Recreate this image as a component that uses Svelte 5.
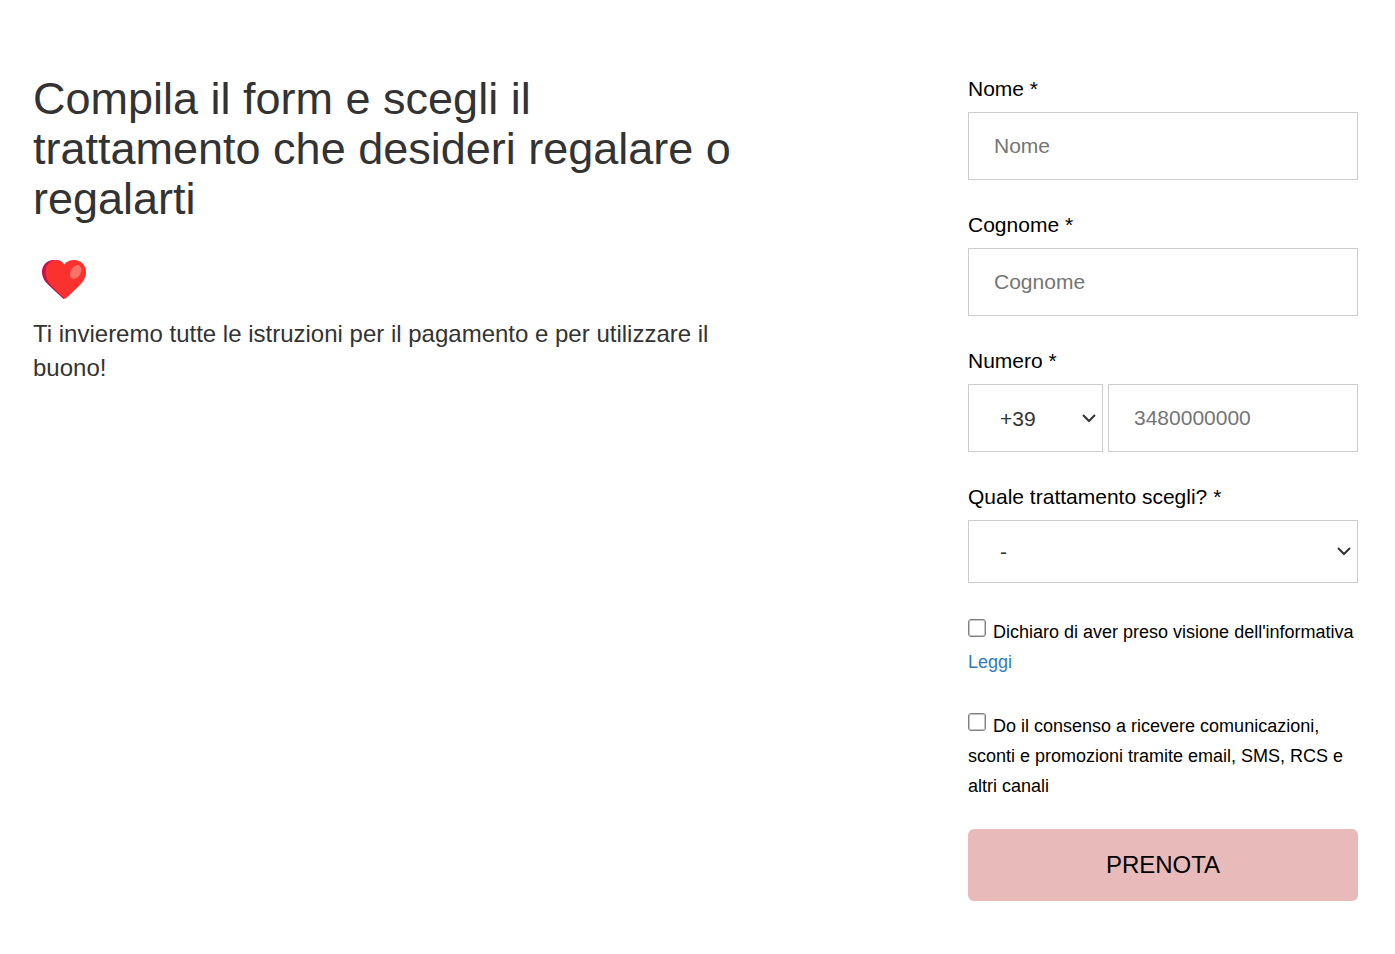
<script>
  let nome = $state('');
  let cognome = $state('');
  let numero = $state('');
</script>

<main>
  <section class="intro">
    <h1>Compila il form e scegli il trattamento che desideri regalare o regalarti</h1>
    <svg class="heart" viewBox="0 0 46 40" role="img" aria-label="Cuore">
      <path fill="#c9104c" d="M22.500 39L9 26.500C4 22 1 17.500 1 12 1 5 6 0 12.500 0h3C19 .5 22 2.500 23 4.500L26 36Z" />
      <path fill="#fb312f" d="M23.500 38.500L11 26.500C7 22 4.500 17.500 4.500 12 4.500 5 9 0 15 0c3.500 0 6.500 1.700 8.200 4.500C25.500 1.700 29 0 33 0c7 0 12 5 12 12 0 5.500-3 10-7.500 14.500L25 38.300q-.8.700-1.500.2Z" />
      <ellipse cx="34.700" cy="12" rx="5" ry="7.500" transform="rotate(32 34.700 12)" fill="#f97268" />
    </svg>
    <p>Ti invieremo tutte le istruzioni per il pagamento e per utilizzare il buono!</p>
  </section>

  <form onsubmit={(e) => e.preventDefault()}>
    <div class="field">
      <label for="nome">Nome *</label>
      <input id="nome" type="text" placeholder="Nome" bind:value={nome} />
    </div>
    <div class="field">
      <label for="cognome">Cognome *</label>
      <input id="cognome" type="text" placeholder="Cognome" bind:value={cognome} />
    </div>
    <div class="field">
      <label for="numero">Numero *</label>
      <div class="phone">
        <select aria-label="Prefisso"><option>+39</option></select>
        <input id="numero" type="tel" placeholder="3480000000" bind:value={numero} />
      </div>
    </div>
    <div class="field">
      <label for="trattamento">Quale trattamento scegli? *</label>
      <select id="trattamento" class="treatment"><option>-</option></select>
    </div>
    <div class="consents">
      <div class="consent">
        <input id="privacy" type="checkbox" />
        <label for="privacy">Dichiaro di aver preso visione dell'informativa</label>
        <a href="#privacy">Leggi</a>
      </div>
      <div class="consent">
        <input id="marketing" type="checkbox" />
        <label for="marketing">Do il consenso a ricevere comunicazioni, sconti e promozioni tramite email, SMS, RCS e altri canali</label>
      </div>
    </div>
    <button type="submit">PRENOTA</button>
  </form>
</main>

<style>
  :global(body) {
    background: #fff;
  }
  main,
  main * {
    box-sizing: border-box;
  }
  main {
    display: grid;
    grid-template-columns: minmax(0, 700px) minmax(0, 390px);
    justify-content: space-between;
    padding: 74px 37px 53px 33px;
    color: #333;
    font-family: "Liberation Sans", Arial, sans-serif;
  }
  h1 {
    margin: 0;
    font-size: 45px;
    font-weight: 400;
    line-height: 50px;
  }
  .heart {
    display: block;
    width: 46px;
    height: 40px;
    margin: 36px 0 17px 8px;
  }
  p {
    margin: 0;
    font-size: 24px;
    line-height: 34px;
  }
  .field {
    margin-bottom: 30px;
  }
  .field label {
    display: block;
    margin-bottom: 8px;
    color: #000;
    font-size: 21px;
    line-height: 30px;
  }
  .field input,
  .field select {
    display: block;
    width: 100%;
    height: 68px;
    padding: 0 25px;
    border: 1px solid #ccc;
    border-radius: 0;
    background-color: #fff;
    color: #333;
    font: 21px "Liberation Sans", Arial, sans-serif;
  }
  .field input::placeholder {
    color: #757575;
  }
  .phone {
    display: grid;
    grid-template-columns: 135px 1fr;
    gap: 5px;
  }
  .field select {
    appearance: none;
    padding: 0 27px 0 31px;
    background-image: url("data:image/svg+xml,%3Csvg xmlns='http://www.w3.org/2000/svg' width='14' height='9' viewBox='0 0 14 9'%3E%3Cpath d='M1 1l6 6 6-6' fill='none' stroke='%23333' stroke-width='2'/%3E%3C/svg%3E");
    background-repeat: no-repeat;
    background-position: right 6px center;
  }
  .field .treatment {
    height: 63px;
  }
  .consents {
    display: grid;
    gap: 34px;
    padding: 4px 0 28px;
  }
  .consent {
    color: #000;
    font-size: 18px;
    line-height: 30px;
  }
  .consent input {
    appearance: none;
    width: 18px;
    height: 18px;
    margin: 0 2px 0 0;
    border: 1px solid #808080;
    border-radius: 3px;
    background: #fff;
    box-shadow: inset 0 0 0 1px #c4c4c4;
    vertical-align: 1px;
  }
  .consent input:checked {
    border-color: #337ab7;
    background: #337ab7;
    box-shadow: inset 0 0 0 2px #fff;
  }
  a {
    color: #337ab7;
    text-decoration: none;
  }
  button {
    width: 100%;
    height: 72px;
    border: 0;
    border-radius: 6px;
    background: #e8baba;
    color: #000;
    font: 24px "Liberation Sans", Arial, sans-serif;
  }
</style>
